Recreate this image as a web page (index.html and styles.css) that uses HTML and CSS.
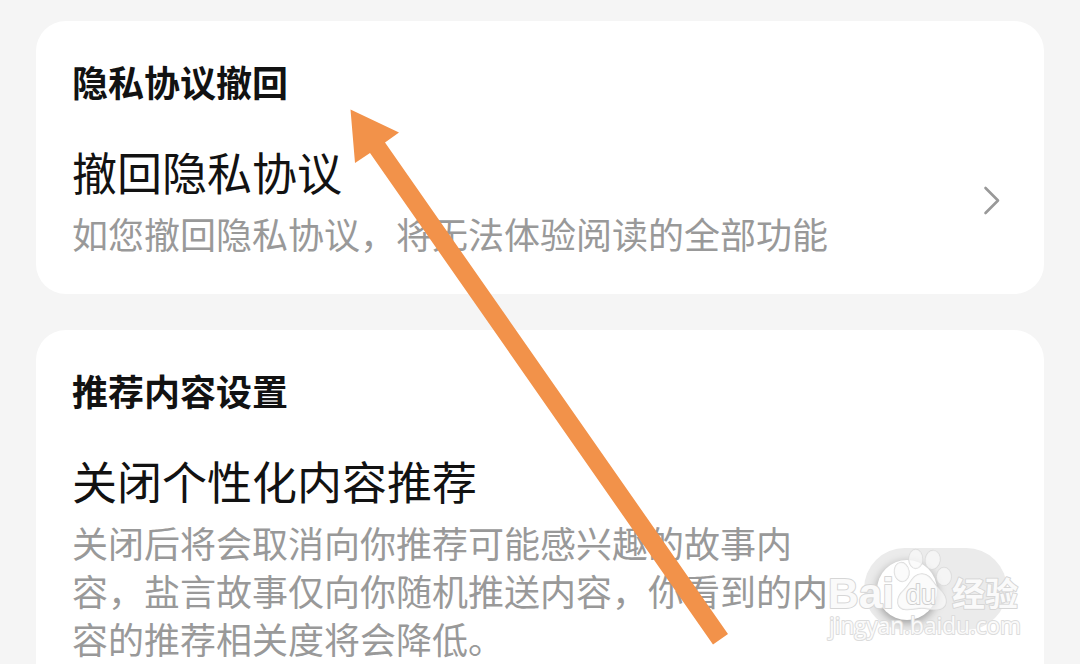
FILE: index.html
```html
<!DOCTYPE html>
<html lang="zh-CN">
<head>
    <meta charset="UTF-8">
    <meta name="viewport" content="width=device-width, initial-scale=1.0">
    <title>隐私设置</title>
    <link rel="stylesheet" href="styles.css">
</head>
<body>

<main class="settings">
    <section class="card">
        <h2 class="card-title">隐私协议撤回</h2>
        <div class="row">
            <div class="row-text">
                <h3 class="row-title">撤回隐私协议</h3>
                <p class="row-desc">如您撤回隐私协议，将无法体验阅读的全部功能</p>
            </div>
            <svg class="chevron" width="18" height="30" viewBox="0 0 18 30">
                <path d="M2.5 3 L15 15.5 L2.5 28" />
            </svg>
        </div>
    </section>

    <section class="card">
        <h2 class="card-title">推荐内容设置</h2>
        <div class="row">
            <div class="row-text">
                <h3 class="row-title">关闭个性化内容推荐</h3>
                <p class="row-desc">关闭后将会取消向你推荐可能感兴趣的故事内容，盐言故事仅向你随机推送内容，你看到的内容的推荐相关度将会降低。</p>
            </div>
            <div class="switch"><span class="knob"></span></div>
        </div>
    </section>
</main>

<!-- 箭头 -->
<svg class="arrow" width="1080" height="664" viewBox="0 0 1080 664">
    <polygon points="350.5,109.5 399,132.5 385,142.5 728,634 713,644.5 370,153 355,163" />
</svg>

<!-- 水印 -->
<svg class="watermark" width="204" height="100" viewBox="824 545 204 100">
    <text class="logo" x="828" y="608" textLength="66" lengthAdjust="spacingAndGlyphs">Bai</text>
    <g class="paw">
        <ellipse cx="901.7" cy="572" rx="7.3" ry="9.5" transform="rotate(-8 901.7 572)" />
        <ellipse cx="915.7" cy="559" rx="6.8" ry="9.5" />
        <ellipse cx="932.7" cy="559.8" rx="7.3" ry="9.3" transform="rotate(8 932.7 559.8)" />
        <ellipse cx="944" cy="576.5" rx="7.2" ry="9" />
        <path d="M922 574 C931 574 933 584 940 590 C949 598 948 609 937 609.500 C931 610 927 608 922 608 C917 608 911 610 906 609.500 C896 609 895 598 904 590 C911 584 912 574 922 574 Z" />
    </g>
    <text class="du" x="906" y="604" textLength="30" lengthAdjust="spacingAndGlyphs">du</text>
    <text class="cn" x="952" y="606">经验</text>
    <text class="url" x="829" y="634" textLength="192" lengthAdjust="spacingAndGlyphs">jingyan.baidu.com</text>
</svg>

</body>
</html>
```
FILE: styles.css
```css
* {
    box-sizing: border-box;
    margin: 0;
    padding: 0;
}

body {
    height: 664px;
    overflow: hidden;
    position: relative;
    background-color: #f5f5f5;
    color: #121212;
    font-family: "Noto Sans CJK SC", sans-serif;
}

.settings {
    display: flex;
    flex-direction: column;
    gap: 36px;
    padding: 21px 36px 0;
}

.card {
    padding: 36px 36px 37px;
    border-radius: 30px;
    background-color: #fff;
}

.card-title {
    margin-bottom: 37px;
    font-size: 36px;
    line-height: 48px;
    font-weight: 700;
}

.row {
    display: flex;
    align-items: center;
    justify-content: space-between;
}

.row-text {
    width: 757px;
    flex-shrink: 0;
}

.row-title {
    margin-bottom: 7px;
    font-size: 45px;
    line-height: 60px;
    font-weight: 400;
}

.row-desc {
    color: #999;
    font-size: 36px;
    line-height: 48px;
}

.chevron {
    margin-right: 7px;
    fill: none;
    stroke: #999;
    stroke-width: 2.6;
    stroke-linecap: round;
    stroke-linejoin: round;
}

.switch {
    align-self: flex-end;
    width: 143px;
    height: 82px;
    margin-right: 1px;
    margin-bottom: 32px;
    padding: 12px 13px;
    border-radius: 41px;
    background-color: #ebebeb;
}

.knob {
    display: block;
    width: 60px;
    height: 60px;
    border-radius: 50%;
    background-color: #fff;
    box-shadow: 0 3px 10px rgba(0, 0, 0, 0.35);
}

.arrow {
    position: absolute;
    top: 0;
    left: 0;
    fill: #f2924a;
}

.watermark {
    position: absolute;
    top: 545px;
    left: 824px;
    fill: #fafafa;
    stroke: #d6d6d6;
    stroke-width: 2;
    stroke-linejoin: round;
    paint-order: stroke;
}

.paw {
    fill: rgba(250, 250, 250, 0.7);
    stroke: #dadada;
    stroke-width: 1.4;
}

.logo {
    font: 700 43px "Liberation Sans", sans-serif;
}

.du {
    font: 400 27px "Liberation Sans", sans-serif;
    stroke: #d0d0d0;
}

.cn {
    font: 700 33px "Noto Sans CJK SC", sans-serif;
}

.url {
    font: 400 23px "Open Sans", sans-serif;
    stroke: #dcdcdc;
}
```
